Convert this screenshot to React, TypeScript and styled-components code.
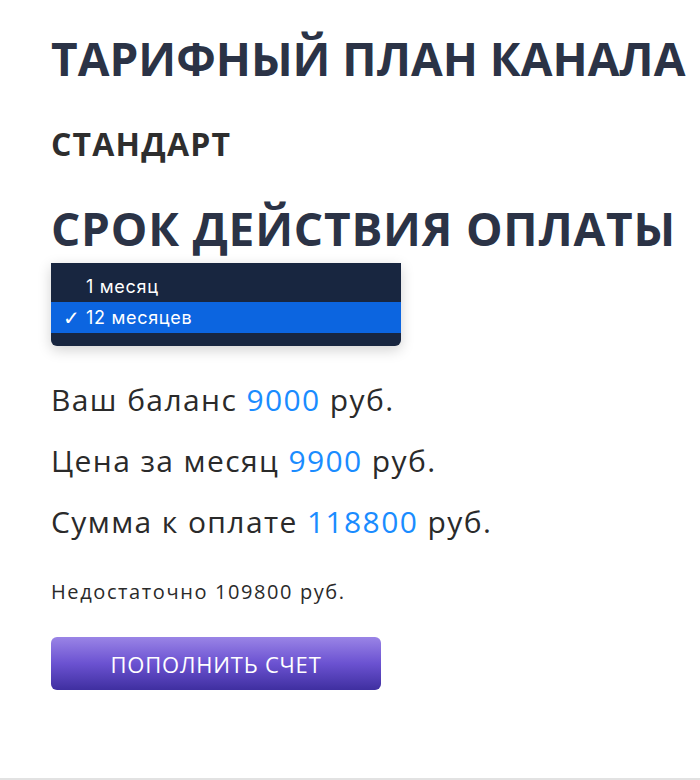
import React from "react";
import styled, { createGlobalStyle } from "styled-components";

const Global = createGlobalStyle`
  html, body { margin: 0; padding: 0; background: #ffffff; }
  body { font-family: "Open Sans", "Liberation Sans", sans-serif; }
`;

const Page = styled.div`
  width: 700px;
  height: 780px;
  box-sizing: border-box;
  display: flex;
  flex-direction: column;
  border-bottom: 2px solid #e2e2e2;
  padding: 30px 0 0 51px;
`;

const Title = styled.h1<{ $top?: number; $ls?: number }>`
  margin: ${(p) => p.$top ?? 0}px 0 0 0;
  font-family: "Open Sans", "Liberation Sans", sans-serif;
  font-weight: 700;
  font-size: 46px;
  line-height: 56px;
  color: #2b3346;
  letter-spacing: ${(p) => p.$ls ?? 0}px;
  white-space: nowrap;
`;

const Plan = styled.h2`
  margin: 40px 0 0 0;
  font-family: "Open Sans", "Liberation Sans", sans-serif;
  font-weight: 700;
  font-size: 32px;
  line-height: 36px;
  letter-spacing: 1.2px;
  color: #2e2e2e;
`;

const Menu = styled.div`
  margin-top: 7px;
  width: 350px;
  background: #182640;
  border-radius: 0 0 6px 6px;
  padding: 8px 0 13px 0;
  box-shadow: 0 4px 14px rgba(0, 0, 0, 0.18);
  display: flex;
  flex-direction: column;
`;

const Option = styled.div<{ $selected?: boolean }>`
  height: 31px;
  display: flex;
  align-items: center;
  padding-left: 12px;
  font-family: "Inter", "Liberation Sans", sans-serif;
  font-size: 18px;
  letter-spacing: 0.7px;
  color: #ffffff;
  background: ${(p) => (p.$selected ? "#0c65e0" : "transparent")};
`;

const Check = styled.span`
  width: 23px;
  display: inline-block;
  font-size: 20px;
  font-family: "DejaVu Sans", sans-serif;
`;

const Lines = styled.div`
  margin-top: 35px;
  display: flex;
  flex-direction: column;
  gap: 24px;
`;

const Line = styled.div`
  font-family: "Open Sans", "Liberation Sans", sans-serif;
  font-weight: 500;
  font-size: 30px;
  line-height: 37px;
  letter-spacing: 1.4px;
  color: #2a2a2a;
`;

const Num = styled.span`
  color: #1a8cff;
`;

const Note = styled.div`
  margin-top: 39px;
  font-family: "Open Sans", "Liberation Sans", sans-serif;
  font-size: 20px;
  line-height: 26px;
  letter-spacing: 1.6px;
  color: #2a2a2a;
`;

const Button = styled.button`
  margin-top: 32px;
  width: 330px;
  height: 53px;
  border: none;
  border-radius: 6px;
  background: linear-gradient(180deg, #9a84e6 0%, #6b52d1 50%, #3f2fa0 100%);
  color: #ffffff;
  font-family: "Open Sans", "Liberation Sans", sans-serif;
  font-weight: 500;
  font-size: 22px;
  letter-spacing: 0.8px;
  cursor: pointer;
`;

export default function App() {
  return (
    <>
      <Global />
      <Page>
        <Title>ТАРИФНЫЙ ПЛАН КАНАЛА</Title>
        <Plan>СТАНДАРТ</Plan>
        <Title $top={38} $ls={0.8}>СРОК ДЕЙСТВИЯ ОПЛАТЫ</Title>
        <Menu>
          <Option>
            <Check />1 месяц
          </Option>
          <Option $selected>
            <Check>✓</Check>12 месяцев
          </Option>
        </Menu>
        <Lines>
          <Line>
            Ваш баланс <Num>9000</Num> руб.
          </Line>
          <Line>
            Цена за месяц <Num>9900</Num> руб.
          </Line>
          <Line>
            Сумма к оплате <Num>118800</Num> руб.
          </Line>
        </Lines>
        <Note>Недостаточно 109800 руб.</Note>
        <Button>ПОПОЛНИТЬ СЧЕТ</Button>
      </Page>
    </>
  );
}
